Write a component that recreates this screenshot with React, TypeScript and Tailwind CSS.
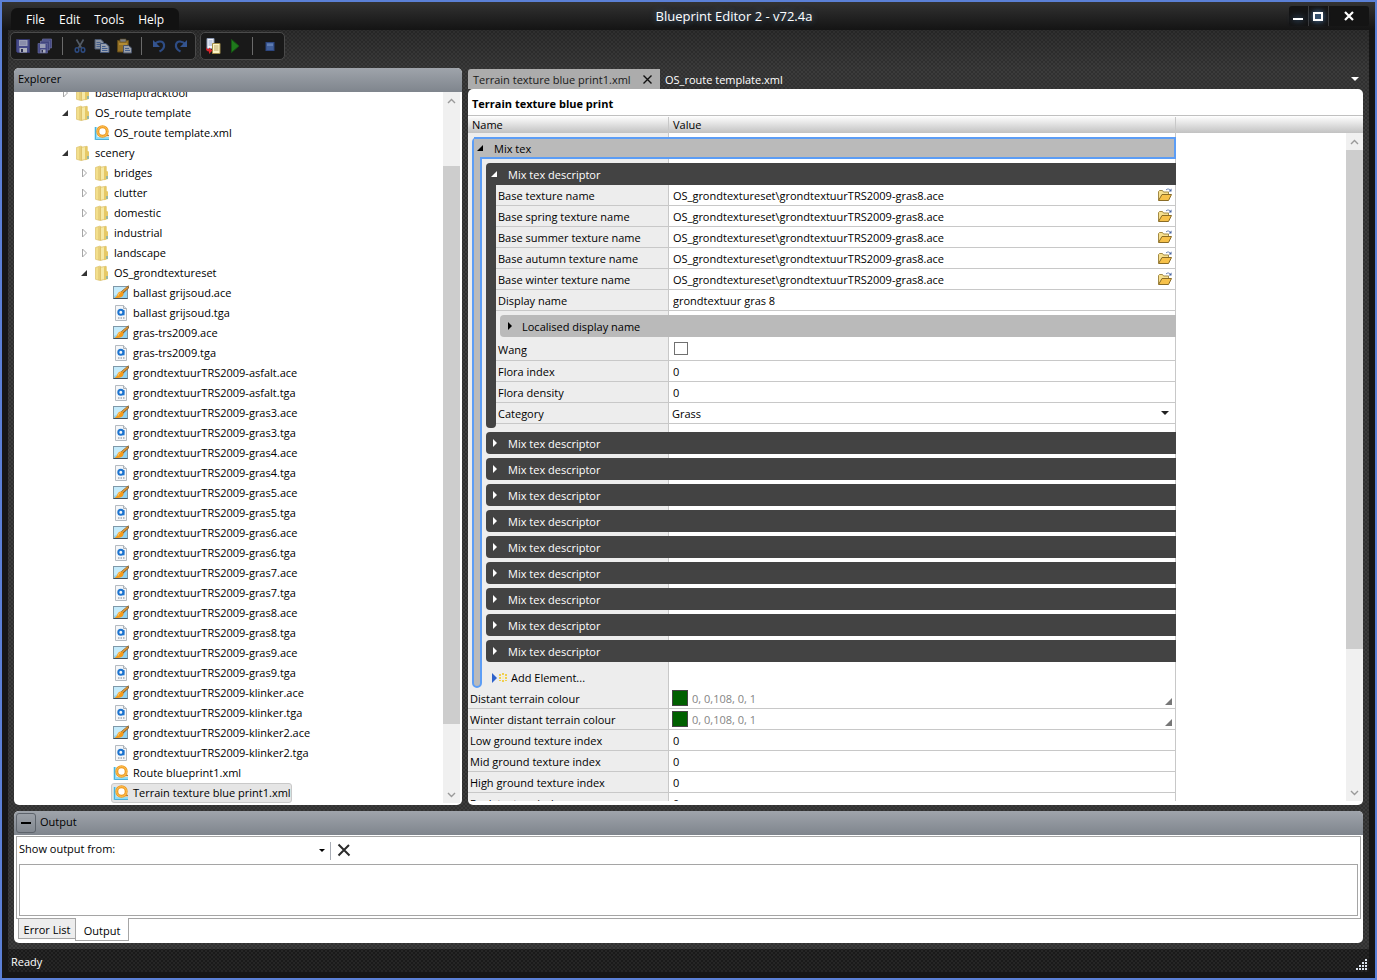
import { useId, type ReactNode } from "react";

const dots =
  "bg-[radial-gradient(#ffffff0d_1px,transparent_1px),radial-gradient(#ffffff0d_1px,transparent_1px)] bg-[length:4px_4px] bg-[position:0_0,2px_2px]";

/* ---------- icons ---------- */

function FolderIcon() {
  return (
    <svg width="16" height="16" viewBox="0 0 16 16" aria-hidden="true">
      <path d="M1.500 2.500 6 1l.8.6V15l-1 .5-4.300-1.200z" fill="#f3df8c" stroke="#d6b95c" strokeWidth=".6" />
      <path d="M6.500 2.200 12 1.300V14l-5.500 1.500z" fill="#f6e9a6" stroke="#d2b252" strokeWidth=".6" />
      <path d="M10 2.200 12.500 1.300V6l1.500.5v7.500l-4 1.300z" fill="#e6c967" />
      <path d="M5 2v13" stroke="#dcc068" />
      <path d="M13 11v3" stroke="#4aa6dd" />
    </svg>
  );
}

function BlueprintIcon() {
  return (
    <svg width="16" height="16" viewBox="0 0 16 16" aria-hidden="true">
      <path d="M2 2v11.500h13" fill="none" stroke="#8fdcf6" strokeWidth="3" />
      <path d="M1.500 2v12.500H15" fill="none" stroke="#4fb0d8" strokeWidth="1" />
      <path d="M12 10.500h3" stroke="#b9803a" strokeWidth="1.500" />
      <circle cx="8.500" cy="6.500" r="4.700" fill="#fff" stroke="#ee9a22" strokeWidth="3" />
      <circle cx="8.500" cy="6.500" r="4.900" fill="none" stroke="#ffc558" strokeWidth="1" />
    </svg>
  );
}

function AceIcon() {
  return (
    <svg width="16" height="16" viewBox="0 0 16 16" aria-hidden="true">
      <rect x=".5" y="1.500" width="14" height="12" fill="#8fd2f2" stroke="#7f98a8" />
      <path d="M1 2h13v3L1 11z" fill="#c5ebfb" />
      <path d="M.5 13.500h14" stroke="#46535c" />
      <path d="M15.500.3 8 6.500l2 2.300L16 3z" fill="#6b4a20" />
      <path d="M14.500 1.300 8.500 6.500l1.200 1.500L15.300 3z" fill="#d9963c" />
      <path d="M8.200 6.500c2.300.5 3 2 2 3.800C9 12.500 6 13.400 1.500 12.800c2.300-.8 2.300-2 3-3.800C5.200 7.200 6.500 6.300 8.200 6.500z" fill="#f59a1a" />
      <path d="M7.500 7.500C6 8 5.600 9.300 5 10.800" stroke="#ffd376" fill="none" />
    </svg>
  );
}

function TgaIcon() {
  return (
    <svg width="16" height="16" viewBox="0 0 16 16" aria-hidden="true">
      <path d="M2.500.5h8l3 3v12h-11z" fill="#f4f6f8" stroke="#b4bac1" />
      <path d="M10.500.5v3h3" fill="#dfe4e8" stroke="#a9b0b8" />
      <circle cx="7.800" cy="7.300" r="2.500" fill="none" stroke="#1b73cf" strokeWidth="2" />
      <path d="M10.800 5v5.300" stroke="#1b73cf" strokeWidth="1.500" />
      <path d="M5 13h1.500M7.500 13H9M10 13h1.500" stroke="#a2a9b1" strokeWidth="1.500" />
    </svg>
  );
}

function OpenFolderIcon() {
  return (
    <svg width="16" height="14" viewBox="0 0 16 14" aria-hidden="true">
      <path d="M1.500 12V3.500l1-1h3l1 1.500h5v3" fill="#f7e08f" stroke="#a38a45" />
      <path d="M1.500 12.500 5 6.500h9.500L11.500 12.500z" fill="#f6c14a" stroke="#8a6c26" />
      <path d="M9 2c1.300-1.500 3-1.200 4-.2" fill="none" stroke="#7089b8" />
      <path d="M14.500.5v3h-3z" fill="#44629f" />
    </svg>
  );
}

function SaveIcon() {
  return (
    <svg width="16" height="16" viewBox="0 0 16 16" aria-hidden="true">
      <path d="M1.500 1.500h13v13h-12l-1-1z" fill="#464a88" stroke="#34376c" />
      <rect x="4" y="2" width="8.500" height="6" fill="#9a9eb6" />
      <path d="M5 4h6M5 6h6" stroke="#787d9f" />
      <rect x="4.500" y="10" width="7.500" height="4.500" fill="#aeb1bc" />
      <rect x="6" y="11" width="2" height="3" fill="#2b2e52" />
    </svg>
  );
}

function SaveAllIcon() {
  return (
    <svg width="16" height="16" viewBox="0 0 16 16" aria-hidden="true">
      <path d="M5.500 1h9v9h-9z" fill="#464a86" stroke="#6a6e9c" strokeWidth=".7" />
      <path d="M3.500 3h9v9h-9z" fill="#41457e" stroke="#6a6e9c" strokeWidth=".7" />
      <path d="M1 5.500h9.500v9.500H1z" fill="#464a88" stroke="#62669a" strokeWidth=".7" />
      <rect x="3" y="6" width="5.500" height="4" fill="#9a9eb6" />
      <rect x="3.500" y="11.500" width="5" height="3.200" fill="#aaadba" />
      <rect x="4.500" y="12" width="1.500" height="2.500" fill="#2b2e52" />
    </svg>
  );
}

function CutIcon() {
  return (
    <svg width="16" height="16" viewBox="0 0 16 16" aria-hidden="true">
      <path d="M4.500 1.500 9.500 10M11.500 1.500 6.500 10" stroke="#525b66" strokeWidth="1.600" />
      <ellipse cx="5" cy="12" rx="1.800" ry="2.200" fill="none" stroke="#2c4a80" strokeWidth="1.500" />
      <ellipse cx="11" cy="12" rx="1.800" ry="2.200" fill="none" stroke="#2c4a80" strokeWidth="1.500" />
    </svg>
  );
}

function CopyIcon() {
  return (
    <svg width="16" height="16" viewBox="0 0 16 16" aria-hidden="true">
      <path d="M1 1.500h6l2.500 2.500v7H1z" fill="#8d95a2" stroke="#4b5870" />
      <path d="M2.500 4.500h4M2.500 6.500h5M2.500 8.500h4" stroke="#46608c" />
      <path d="M6.500 5.500h5.500l3 3v6H6.500z" fill="#9ba2ae" stroke="#435577" />
      <path d="M8 8.500h3.500M8 10.500h5.500M8 12.500h5.500" stroke="#3f5c8f" />
    </svg>
  );
}

function PasteIcon() {
  return (
    <svg width="16" height="16" viewBox="0 0 16 16" aria-hidden="true">
      <path d="M1.500 2.500h11v11.500h-11z" fill="#957126" stroke="#5f4919" />
      <path d="M4 1h6v3H4z" fill="#7c7d80" stroke="#5a4a20" strokeWidth=".6" />
      <path d="M3 5h8v2H3z" fill="#b38c34" />
      <path d="M7.500 7.500h5l3 2.500v5h-8z" fill="#9aa0aa" stroke="#4a5469" />
      <path d="M9 10.500h4M9 12.500h5" stroke="#46608c" />
    </svg>
  );
}

function UndoIcon({ flip }: { flip?: boolean }) {
  return (
    <svg width="16" height="16" viewBox="0 0 16 16" aria-hidden="true">
      <g transform={flip ? "translate(16 0) scale(-1 1)" : undefined}>
        <path d="M3.500 6.500C6 3 12 2 13 6.500c.5 3-1.500 5.500-4.500 7" fill="none" stroke="#2e4c84" strokeWidth="2.200" />
        <path d="M2 2v7h7z" fill="#34548f" />
      </g>
    </svg>
  );
}

function ExportIcon() {
  return (
    <svg width="16" height="16" viewBox="0 0 16 16" aria-hidden="true">
      <path d="M2 .5h7v10H2z" fill="#f3f5fa" stroke="#8b98b3" />
      <path d="M3.500 3h4M3.500 5h4M3.500 7h4" stroke="#8fa3cc" />
      <path d="M7.500 5.500h7.500v10H7.500z" fill="#fbf3c5" stroke="#a08c4a" />
      <path d="M9 8h4.500M9 10h4.500M9 12h4.500" stroke="#b9a468" />
      <path d="M1 9c-.5 3 1 4.500 3 4.500V16l3.500-3.500L4 9.500V11C2.500 11.200 1.500 10.500 1 9z" fill="#d8242b" />
    </svg>
  );
}

function Chevron({ down }: { down?: boolean }) {
  return (
    <svg width="9" height="6" viewBox="0 0 9 6" aria-hidden="true">
      <path d={down ? "M1 1l3.500 3.500L8 1" : "M1 5l3.500-3.500L8 5"} fill="none" stroke="#9a9a9a" strokeWidth="1.400" />
    </svg>
  );
}

function Arrow({ open, className }: { open?: boolean; className: string }) {
  return (
    <svg width="8" height="8" viewBox="0 0 8 8" className={className} aria-hidden="true">
      <path d={open ? "M7 1v6H1z" : "M3 0l4 4-4 4z"} fill="currentColor" />
    </svg>
  );
}

/* ---------- shared parts ---------- */

function ScrollBar({ low, thumb }: { low?: boolean; thumb: string }) {
  return (
    <div className="flex w-[17px] shrink-0 flex-col bg-[#f0f0f0]">
      <button type="button" aria-label="Scroll up" className="flex h-[17px] shrink-0 items-center justify-center">
        <Chevron />
      </button>
      <div className="flex min-h-0 flex-1 flex-col">
        {low && <div className="h-[57px] shrink-0" />}
        <div className={thumb + " bg-[#cdcdcd]"} />
      </div>
      <button type="button" aria-label="Scroll down" className="flex h-[17px] shrink-0 items-center justify-center">
        <Chevron down />
      </button>
    </div>
  );
}

type Kind = "folder" | "xml" | "ace" | "tga";
type Node = { depth: number; kind: Kind; name: string; open?: boolean; selected?: boolean };

const textures = ["asfalt", "gras3", "gras4", "gras5", "gras6", "gras7", "gras8", "gras9", "klinker", "klinker2"];

const pair = (name: string): Node[] => [
  { depth: 3, kind: "ace", name: name + ".ace" },
  { depth: 3, kind: "tga", name: name + ".tga" },
];

const nodes: Node[] = [
  { depth: 1, kind: "folder", name: "OS_route template", open: true },
  { depth: 2, kind: "xml", name: "OS_route template.xml" },
  { depth: 1, kind: "folder", name: "scenery", open: true },
  { depth: 2, kind: "folder", name: "bridges" },
  { depth: 2, kind: "folder", name: "clutter" },
  { depth: 2, kind: "folder", name: "domestic" },
  { depth: 2, kind: "folder", name: "industrial" },
  { depth: 2, kind: "folder", name: "landscape" },
  { depth: 2, kind: "folder", name: "OS_grondtextureset", open: true },
  ...pair("ballast grijsoud"),
  ...pair("gras-trs2009"),
  ...textures.flatMap((t) => pair("grondtextuurTRS2009-" + t)),
  { depth: 3, kind: "xml", name: "Route blueprint1.xml" },
  { depth: 3, kind: "xml", name: "Terrain texture blue print1.xml", selected: true },
];

const icons = { folder: FolderIcon, xml: BlueprintIcon, ace: AceIcon, tga: TgaIcon };
const indent = ["", "pl-[43px]", "pl-[62px]", "pl-[81px]"];

function TreeRow({ node }: { node: Node }) {
  const Icon = icons[node.kind];
  return (
    <li className={"flex h-5 shrink-0 items-center " + indent[node.depth]}>
      <span className="flex w-4 shrink-0 items-center justify-center">
        {node.kind === "folder" &&
          (node.open ? (
            <Arrow open className="text-[#333]" />
          ) : (
            <svg width="8" height="10" viewBox="0 0 8 10" aria-hidden="true">
              <path d="M2.500 1 6.500 5 2.500 9z" fill="#fff" stroke="#a6a6a6" />
            </svg>
          ))}
      </span>
      <button
        type="button"
        className={
          "flex h-5 items-center gap-1 rounded-[3px] border pl-px " +
          (node.selected ? "border-[#c9c9c9] bg-[#e5e5e5]" : "border-transparent")
        }
      >
        <Icon />
        <span className="whitespace-nowrap">{node.name}</span>
      </button>
    </li>
  );
}

function Explorer() {
  return (
    <section className="flex w-[448px] shrink-0 flex-col overflow-hidden rounded-[5px] bg-white">
      <h2 className="flex h-6 shrink-0 items-center bg-linear-to-b from-[#9fa4ab] to-[#7f858d] pb-[2px] pl-1">Explorer</h2>
      <div className="flex min-h-0 flex-1 pr-[2px] pb-[2px]">
        <ul className="flex min-w-0 flex-1 flex-col overflow-hidden">
          <li className="flex h-[11px] shrink-0 items-end overflow-hidden">
            <ul>
              <TreeRow node={{ depth: 1, kind: "folder", name: "basemaptracktool" }} />
            </ul>
          </li>
          {nodes.map((n) => (
            <TreeRow key={n.name} node={n} />
          ))}
        </ul>
        <ScrollBar low thumb="h-[558px]" />
      </div>
    </section>
  );
}

/* ---------- property grid ---------- */

function Row({ label, id, children }: { label: string; id?: string; children: ReactNode }) {
  return (
    <div className="mr-px flex h-[21px] shrink-0 items-stretch border-b border-[#c8c8c8]">
      <label htmlFor={id} className="flex flex-1 items-center pt-[2px] pl-[2px] whitespace-nowrap">
        {label}
      </label>
      <div className="flex w-[506px] items-center">{children}</div>
    </div>
  );
}

function TextRow({ label, value, browse }: { label: string; value: string; browse?: boolean }) {
  const id = useId();
  return (
    <Row label={label} id={id}>
      <input id={id} defaultValue={value} className="h-5 min-w-0 flex-1 bg-transparent pl-1 outline-none" />
      {browse && (
        <button type="button" aria-label={"Browse " + label} className="mr-[2px]">
          <OpenFolderIcon />
        </button>
      )}
    </Row>
  );
}

function ColourRow({ label }: { label: string }) {
  const id = useId();
  return (
    <Row label={label} id={id}>
      <span className="ml-[3px] h-4 w-4 border border-[#444] bg-[#006000]" />
      <input id={id} defaultValue="0, 0,108, 0, 1" className="h-5 min-w-0 flex-1 bg-transparent pl-1 text-[#858585] outline-none" />
      <button type="button" aria-label={"Edit " + label} className="mr-[2px] flex h-4 items-end">
        <svg width="8" height="8" viewBox="0 0 8 8" aria-hidden="true">
          <path d="M7 0v7H0z" fill="#777" />
        </svg>
      </button>
    </Row>
  );
}

function DescriptorHeader({ open }: { open?: boolean }) {
  return (
    <button
      type="button"
      className={
        "flex h-[22px] w-full shrink-0 items-center gap-[10px] bg-[#434343] pl-1 text-white " +
        (open ? "rounded-tl-[4px]" : "rounded-l-[4px]")
      }
    >
      <Arrow open={open} className="text-white" />
      <span className="pt-[2px]">Mix tex descriptor</span>
    </button>
  );
}

function MixTexDescriptor() {
  const wang = useId();
  const category = useId();
  return (
    <div>
      <DescriptorHeader open />
      <div className="flex">
        <div className="w-[10px] shrink-0 rounded-b-[4px] bg-[#434343]" />
        <div className="flex-1 pb-1">
          {["Base", "Base spring", "Base summer", "Base autumn", "Base winter"].map((n) => (
            <TextRow key={n} browse label={n + " texture name"} value="OS_grondtextureset\grondtextuurTRS2009-gras8.ace" />
          ))}
          <TextRow label="Display name" value="grondtextuur gras 8" />
          <div className="pt-1 pl-1">
            <button type="button" className="flex h-[22px] w-full items-center gap-[9px] rounded-l-[4px] bg-[#bababa] pl-[5px]">
              <Arrow className="text-black" />
              <span className="pt-[2px]">Localised display name</span>
            </button>
          </div>
          <div className="mr-px flex h-6 items-center border-b border-[#c8c8c8]">
            <label htmlFor={wang} className="flex-1 pt-[2px] pl-[2px]">
              Wang
            </label>
            <div className="flex w-[506px] items-center pl-[5px]">
              <input id={wang} type="checkbox" className="h-[13px] w-[14px] appearance-none border border-[#707070] bg-white" />
            </div>
          </div>
          <TextRow label="Flora index" value="0" />
          <TextRow label="Flora density" value="0" />
          <Row label="Category" id={category}>
            <div className="relative flex flex-1">
              <select id={category} className="h-5 w-full appearance-none bg-transparent pt-px pl-[3px] outline-none">
                <option>Grass</option>
              </select>
              <svg width="8" height="4" viewBox="0 0 8 4" className="pointer-events-none absolute top-2 right-[6px]" aria-hidden="true">
                <path d="M0 0h8L4 4z" fill="#222" />
              </svg>
            </div>
          </Row>
        </div>
      </div>
    </div>
  );
}

function MixTex() {
  return (
    <div className="flex shrink-0 pt-1 pl-1">
      <div className="w-[10px] shrink-0 rounded-tl-[5px] rounded-b-[5px] border-2 border-[#5c9df5] bg-[#bababa]" />
      <div className="-ml-[2px] flex flex-1 flex-col">
        <div className="flex">
          <button type="button" className="-ml-[6px] flex h-[22px] flex-1 items-center gap-[10px] border-t-2 border-r-2 border-[#5c9df5] bg-[#bababa] pb-[2px] pl-[2px]">
            <Arrow open className="text-black" />
            <span className="pt-[2px]">Mix tex</span>
          </button>
        </div>
        <div className="-mt-[2px] h-[2px] shrink-0 bg-[#5c9df5]" />
        <div className="flex flex-col gap-1 pt-1 pl-[6px]">
          <MixTexDescriptor />
          {Array.from({ length: 9 }, (_, i) => (
            <DescriptorHeader key={i} />
          ))}
          <button type="button" className="flex h-[22px] items-center gap-1 pt-px pl-[6px]">
            <svg width="15" height="12" viewBox="0 0 15 12" aria-hidden="true">
              <path d="M0 1l5 5-5 5z" fill="#2d62cc" />
              <path
                d="M7 2h2v2H7zM10 1h2v2h-2zM13 2h2v2h-2zM7 5h2v2H7zM13 5h2v2h-2zM7 8h2v1H7zM10 8h2v2h-2zM13 8h2v1h-2z"
                fill="#f0cf4e"
              />
              <path d="M10 4h2v3h-2z" fill="#fbefb0" />
            </svg>
            <span className="pt-px">Add Element...</span>
          </button>
        </div>
      </div>
    </div>
  );
}

function Editor() {
  return (
    <section className="flex min-w-0 flex-1 flex-col">
      <div className="flex h-[21px] shrink-0 items-end">
        <div className="flex h-5 w-[192px] items-center justify-between rounded-tl-[3px] bg-[#acacac] pt-px pr-2 pl-[5px]">
          <button type="button" className="whitespace-nowrap text-[#1a1a1a]">
            Terrain texture blue print1.xml
          </button>
          <button type="button" aria-label="Close tab">
            <svg width="9" height="9" viewBox="0 0 9 9" aria-hidden="true">
              <path d="M.5.5l8 8M8.500.5l-8 8" stroke="#111" strokeWidth="1.400" />
            </svg>
          </button>
        </div>
        <button type="button" className="flex h-5 items-center pt-px pl-[5px] text-white">
          OS_route template.xml
        </button>
        <button type="button" aria-label="Open documents" className="mr-1 ml-auto flex h-5 items-center">
          <svg width="8" height="4" viewBox="0 0 8 4" aria-hidden="true">
            <path d="M0 0h8L4 4z" fill="#fff" />
          </svg>
        </button>
      </div>
      <div className="flex min-h-0 flex-1 flex-col overflow-hidden rounded-[5px] bg-white pb-1">
        <h1 className="flex h-[27px] shrink-0 items-center border-b border-[#c0c0c0] pt-[3px] pl-1 font-bold">Terrain texture blue print</h1>
        <div className="flex h-[17px] shrink-0 items-center bg-linear-to-b from-white to-[#c2c2c2]">
          <span className="w-[200px] pl-1">Name</span>
          <span className="w-[508px] border-x border-[#c8c8c8] pl-1">Value</span>
        </div>
        <div className="flex min-h-0 flex-1">
          <div className="flex w-[708px] shrink-0 flex-col overflow-hidden bg-[linear-gradient(to_right,#ededed_200px,#c8c8c8_200px,#c8c8c8_201px,#fff_201px,#fff_707px,#c8c8c8_707px)]">
            <MixTex />
            <ColourRow label="Distant terrain colour" />
            <ColourRow label="Winter distant terrain colour" />
            <TextRow label="Low ground texture index" value="0" />
            <TextRow label="Mid ground texture index" value="0" />
            <TextRow label="High ground texture index" value="0" />
            <TextRow label="Rock texture index" value="0" />
          </div>
          <div className="flex-1" />
          <ScrollBar thumb="h-[499px]" />
        </div>
      </div>
    </section>
  );
}

/* ---------- output ---------- */

function Output() {
  return (
    <section className="mx-[6px] flex h-[132px] shrink-0 flex-col overflow-hidden rounded-[5px] bg-white">
      <div className="flex h-6 shrink-0 items-center gap-1 bg-linear-to-b from-[#9fa4ab] to-[#7f858d] pl-[2px]">
        <button type="button" aria-label="Collapse output" className="flex h-5 w-5 items-center justify-center rounded-[3px] border border-[#5d636b]">
          <span className="h-[2px] w-[10px] bg-black" />
        </button>
        <h2 className="pb-[2px]">Output</h2>
      </div>
      <div className="mx-[2px] mt-px flex h-[83px] shrink-0 flex-col border border-[#a5a5a5] px-[2px] pb-[2px]">
        <div className="flex h-[27px] shrink-0 items-center">
          <label htmlFor="source" className="w-[100px] pb-1">
            Show output from:
          </label>
          <div className="relative flex w-[208px]">
            <select id="source" className="h-5 w-full appearance-none outline-none" />
            <svg width="6" height="3" viewBox="0 0 6 3" className="pointer-events-none absolute top-2 right-[2px]" aria-hidden="true">
              <path d="M0 0h6L3 3z" fill="#000" />
            </svg>
          </div>
          <span className="ml-[3px] h-[18px] w-px bg-[#a9adb5]" />
          <button type="button" aria-label="Clear output" className="ml-[6px] pb-[2px]">
            <svg width="14" height="14" viewBox="0 0 14 14" aria-hidden="true">
              <path d="M1.500 1.500 12.500 12.500M12 2 1.500 12.500" stroke="#2b2b2b" strokeWidth="2" />
            </svg>
          </button>
        </div>
        <textarea aria-label="Output text" className="min-h-0 flex-1 resize-none border border-[#a5a5a5] outline-none" />
      </div>
      <div className="-mt-px flex items-start pl-1">
        <button type="button" className="-mr-px flex h-[21px] w-[58px] items-center justify-center border border-[#a5a5a5] bg-[#ededed] pt-[2px] whitespace-nowrap">
          Error List
        </button>
        <button type="button" className="flex h-[23px] w-[54px] items-center justify-center border border-t-0 border-[#a5a5a5] bg-white pt-[3px]">
          Output
        </button>
      </div>
    </section>
  );
}

/* ---------- window ---------- */

const glow = "[text-shadow:0_0_6px_#4c7099]";

function TitleBar() {
  return (
    <header className="flex h-7 shrink-0 items-end justify-between bg-linear-to-b from-[#333] to-[#141414]">
      <nav className={"ml-[9px] flex h-[22px] w-[168px] items-center gap-[14px] rounded-t-[6px] bg-[#121212] pt-[2px] pl-[15px] text-[12px] text-white " + glow}>
        {["File", "Edit", "Tools", "Help"].map((m) => (
          <button type="button" key={m}>
            {m}
          </button>
        ))}
      </nav>
      <div className={"flex h-full items-center text-[13px] text-white " + glow}>Blueprint Editor 2 - v72.4a</div>
      <div className="mr-[6px] mb-1 flex h-5 w-20 items-center rounded-[3px] bg-[#141414]">
        <button type="button" aria-label="Minimise" className="flex h-5 w-5 items-center justify-center border-r border-[#3a3a3a]">
          <span className="mt-[6px] h-[2px] w-[10px] bg-white shadow-[0_0_6px_#4f7fb5]" />
        </button>
        <button type="button" aria-label="Maximise" className="flex h-5 w-5 items-center justify-center border-r border-[#3a3a3a]">
          <span className="h-[9px] w-[10px] border-2 border-white bg-[#34506e] shadow-[0_0_6px_#4f7fb5]" />
        </button>
        <button type="button" aria-label="Close" className="flex h-5 flex-1 items-center justify-center">
          <svg width="10" height="10" viewBox="0 0 10 10" aria-hidden="true">
            <path d="M1 1l8 8M9 1 1 9" stroke="#fff" strokeWidth="2.200" />
          </svg>
        </button>
      </div>
    </header>
  );
}

const group = "flex h-7 items-center rounded-[5px] border border-[#4a4a4a] bg-[#191919]";

function ToolButton({ label, children }: { label: string; children: ReactNode }) {
  return (
    <button type="button" aria-label={label} className="flex w-[22px] justify-center">
      {children}
    </button>
  );
}

function ToolBar() {
  const sep = <span className="mx-[6px] h-[18px] w-px shrink-0 bg-[#6a6a6a]" />;
  return (
    <div className="flex h-[38px] shrink-0 items-start gap-1 bg-linear-to-b from-[#00000038] to-transparent pt-[2px] pl-[2px]">
      <div className={group + " w-[186px] pl-[1px]"}>
        <ToolButton label="Save"><SaveIcon /></ToolButton>
        <ToolButton label="Save all"><SaveAllIcon /></ToolButton>
        {sep}
        <ToolButton label="Cut"><CutIcon /></ToolButton>
        <ToolButton label="Copy"><CopyIcon /></ToolButton>
        <ToolButton label="Paste"><PasteIcon /></ToolButton>
        {sep}
        <ToolButton label="Undo"><UndoIcon /></ToolButton>
        <ToolButton label="Redo"><UndoIcon flip /></ToolButton>
      </div>
      <div className={group + " w-[85px] pl-[1px]"}>
        <ToolButton label="Export"><ExportIcon /></ToolButton>
        <ToolButton label="Run">
          <svg width="16" height="16" viewBox="0 0 16 16" aria-hidden="true">
            <path d="M4.500 1.500 12 8l-7.500 6.500z" fill="#1f7a1c" stroke="#155513" />
          </svg>
        </ToolButton>
        {sep}
        <ToolButton label="Stop">
          <svg width="16" height="16" viewBox="0 0 16 16" aria-hidden="true">
            <rect x="4" y="4.500" width="8" height="8" fill="#405e98" stroke="#2c4680" />
            <path d="M5 5.500h6v2.500H5z" fill="#5f7cb2" />
          </svg>
        </ToolButton>
      </div>
    </div>
  );
}

function StatusBar() {
  return (
    <footer className={"mx-[6px] mb-[6px] flex h-[23px] shrink-0 items-center justify-between bg-[#1a1a1a] pr-[2px] pl-[3px] text-white " + dots}>
      <span className="pt-[2px]">Ready</span>
      <svg width="11" height="11" viewBox="0 0 11 11" className="mt-2" aria-hidden="true">
        <path
          d="M9 0h2v2H9zM6 3h2v2H6zM9 3h2v2H9zM3 6h2v2H3zM6 6h2v2H6zM9 6h2v2H9zM0 9h2v2H0zM3 9h2v2H3zM6 9h2v2H6zM9 9h2v2H9z"
          fill="#dce4ee"
        />
      </svg>
    </footer>
  );
}

export default function App() {
  return (
    <div className="flex h-screen flex-col border-2 border-[#5b80d6] bg-[#161616] font-['Open_Sans','Noto_Sans',sans-serif] text-[11px] leading-4 text-black">
      <TitleBar />
      <main className={"mx-[6px] flex min-h-0 flex-1 flex-col bg-[#303030] pb-[6px] " + dots}>
        <ToolBar />
        <div className="mx-[6px] mb-[6px] flex min-h-0 flex-1 gap-[6px]">
          <Explorer />
          <Editor />
        </div>
        <Output />
      </main>
      <StatusBar />
    </div>
  );
}
